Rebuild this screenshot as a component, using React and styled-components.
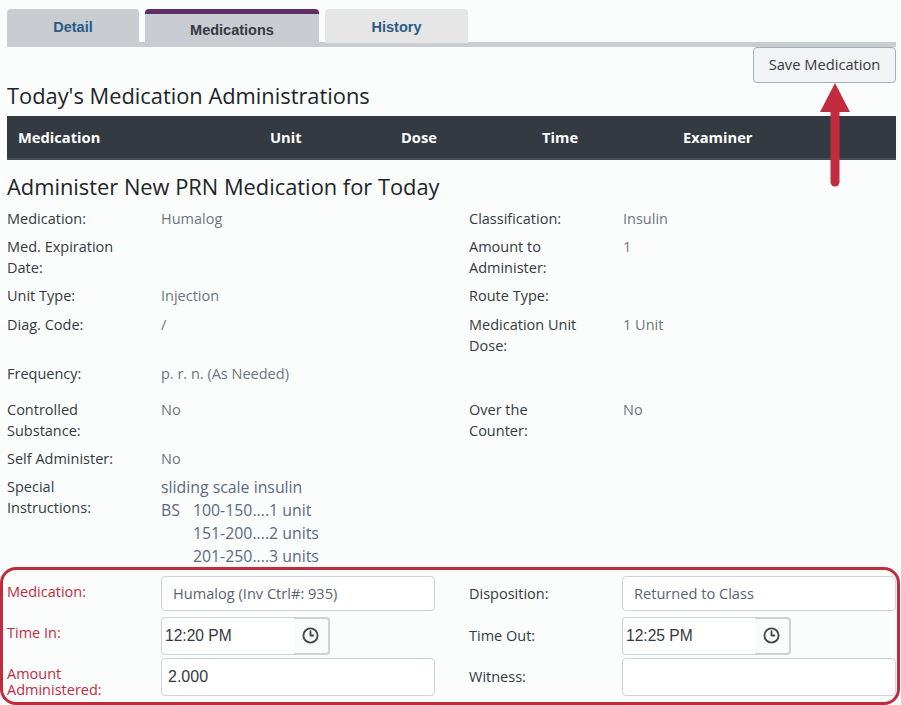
import styled, { createGlobalStyle } from "styled-components";
import { Clock3 } from "lucide-react";

const GlobalStyle = createGlobalStyle`
  html, body {
    margin: 0;
    padding: 0;
    background: #fbfdfd;
  }
  body {
    font-family: "Open Sans", "Liberation Sans", sans-serif;
    font-size: 14.5px;
    color: #343a40;
  }
`;

const details = [
  { label: "Medication:", value: "Humalog", label2: "Classification:", value2: "Insulin", gap: 7 },
  { label: "Med. Expiration Date:", label2: "Amount to Administer:", value2: "1" },
  { label: "Unit Type:", value: "Injection", label2: "Route Type:" },
  { label: "Diag. Code:", value: "/", label2: "Medication Unit Dose:", value2: "1 Unit" },
  { label: "Frequency:", value: "p. r. n. (As Needed)", gap: 15 },
  { label: "Controlled Substance:", value: "No", label2: "Over the Counter:", value2: "No", gap: 7 },
  { label: "Self Administer:", value: "No", gap: 7 },
];

const App = () => {
  return (
    <Page>
      <GlobalStyle />
      <Tabs>
        <Tab>Detail</Tab>
        <ActiveTab>Medications</ActiveTab>
        <Tab $light>History</Tab>
      </Tabs>

      <Toolbar>
        <SaveButton>Save Medication</SaveButton>
        <Arrow width="24" height="106" viewBox="0 0 24 106">
          <path d="M12 20V99" stroke="#c02c3d" strokeWidth="9" strokeLinecap="round" />
          <path d="M12 0L27 29H-3Z" fill="#c02c3d" />
        </Arrow>
      </Toolbar>

      <Title>Today's Medication Administrations</Title>
      <TableHead>
        <Col $w={252}>Medication</Col>
        <Col $w={131}>Unit</Col>
        <Col $w={141}>Dose</Col>
        <Col $w={141}>Time</Col>
        <Col>Examiner</Col>
      </TableHead>

      <SubTitle>Administer New PRN Medication for Today</SubTitle>
      {details.map((row) => (
        <DetailRow key={row.label} $gap={row.gap}>
          <Label>{row.label}</Label>
          <Value>{row.value}</Value>
          <Label>{row.label2}</Label>
          <Value>{row.value2}</Value>
        </DetailRow>
      ))}
      <DetailRow $gap={-1}>
        <Label>Special Instructions:</Label>
        <Instructions>
          <div>sliding scale insulin</div>
          <ScaleRow>
            <span>BS</span>
            <ScaleList>
              <div>100-150....1 unit</div>
              <div>151-200....2 units</div>
              <div>201-250....3 units</div>
            </ScaleList>
          </ScaleRow>
        </Instructions>
      </DetailRow>

      <FormBox>
        <FormRow $gap={6}>
          <RedLabel>Medication:</RedLabel>
          <TextInput readOnly value="Humalog (Inv Ctrl#: 935)" />
          <FormLabel>Disposition:</FormLabel>
          <TextInput readOnly value="Returned to Class" />
        </FormRow>
        <FormRow $gap={3}>
          <RedLabel>Time In:</RedLabel>
          <TimeField>
            <TimeInput readOnly value="12:20 PM" />
            <ClockButton><Clock3 size={17} strokeWidth={2.6} /></ClockButton>
          </TimeField>
          <FormLabel>Time Out:</FormLabel>
          <TimeField>
            <TimeInput readOnly value="12:25 PM" />
            <ClockButton><Clock3 size={17} strokeWidth={2.6} /></ClockButton>
          </TimeField>
        </FormRow>
        <FormRow $gap={0}>
          <RedLabel>Amount Administered:</RedLabel>
          <AmountInput readOnly value="2.000" />
          <FormLabel>Witness:</FormLabel>
          <AmountInput readOnly value="" />
        </FormRow>
      </FormBox>
    </Page>
  );
};

const Page = styled.div`
  width: 889px;
  height: 696px;
  padding: 9px 5px 0 7px;
  overflow: hidden;
`;

const Tabs = styled.div`
  display: flex;
  gap: 6px;
  height: 33px;
  border-bottom: 5px solid #c9ccd1;
`;

const Tab = styled.div`
  width: ${(p) => (p.$light ? "143px" : "132px")};
  height: ${(p) => (p.$light ? "34px" : "33px")};
  background: ${(p) => (p.$light ? "#e6e6e7" : "#c9ccd1")};
  border-radius: 4px 4px 0 0;
  color: #2a5a86;
  font-family: "Liberation Sans", sans-serif;
  font-size: 14.5px;
  font-weight: 700;
  line-height: 36px;
  text-align: center;
`;

const ActiveTab = styled.div`
  width: 174px;
  height: 33px;
  box-sizing: border-box;
  background: #c9ccd1;
  border-top: 5px solid #5f2f68;
  border-radius: 4px 4px 0 0;
  color: #343a40;
  font-family: "Liberation Sans", sans-serif;
  font-size: 14.5px;
  font-weight: 700;
  line-height: 32px;
  text-align: center;
`;

const Toolbar = styled.div`
  position: relative;
  display: flex;
  justify-content: flex-end;
`;

const SaveButton = styled.button`
  width: 143px;
  height: 36px;
  padding: 0 0 2px;
  background: #f2f3f5;
  border: 1px solid #a4aeb8;
  border-radius: 4px;
  color: #343a40;
  font-family: inherit;
  font-size: 14.7px;
`;

const Arrow = styled.svg`
  position: absolute;
  top: 36px;
  right: 49px;
  overflow: visible;
`;

const Title = styled.h2`
  margin: 0;
  height: 33px;
  color: #212529;
  font-size: 21.85px;
  font-weight: 400;
  line-height: 26px;
`;

const TableHead = styled.div`
  display: flex;
  align-items: center;
  box-sizing: border-box;
  height: 44px;
  padding-left: 11px;
  background: #343a42;
  border-bottom: 2px solid #474d55;
  color: #fff;
  font-size: 14.7px;
  font-weight: 700;
`;

const Col = styled.div`
  width: ${(p) => (p.$w ? `${p.$w}px` : "auto")};
`;

const SubTitle = styled.h3`
  margin: 13px 0 7.5px;
  height: 27px;
  color: #212529;
  font-size: 21.85px;
  font-weight: 400;
  line-height: 27px;
`;

const DetailRow = styled.div`
  display: grid;
  grid-template-columns: 154px 308px 154px 273px;
  margin-bottom: ${(p) => (p.$gap === undefined ? "7.5px" : `${p.$gap}px`)};
  line-height: 21px;
`;

const Label = styled.div`
  width: 118px;
  color: #343a40;
`;

const Value = styled.div`
  color: #6c757d;
`;

const Instructions = styled.div`
  color: #5a6a85;
  font-size: 15.85px;
  line-height: 23px;
`;

const ScaleRow = styled.div`
  display: flex;
`;

const ScaleList = styled.div`
  margin-left: 13px;
`;

const FormBox = styled.div`
  box-sizing: border-box;
  height: 138px;
  margin: 0 -4px 0 -7px;
  padding: 6px 1px 0 4px;
  border: 3px solid #c02c3d;
  border-radius: 16px;
`;

const FormRow = styled.div`
  display: grid;
  grid-template-columns: 154px 308px 153px 274px;
  align-items: start;
  margin-bottom: ${(p) => p.$gap}px;
  line-height: 21px;
`;

const FormLabel = styled.label`
  align-self: center;
  width: 110px;
  margin-bottom: 1px;
  color: #343a40;
`;

const RedLabel = styled(FormLabel)`
  align-self: start;
  margin: 8px 0 -2px;
  color: #c02c3d;
  line-height: 16px;
`;

const TextInput = styled.input`
  box-sizing: border-box;
  width: 274px;
  height: 35px;
  padding: 0 11px 1px;
  background: #fff;
  border: 1px solid #ced4da;
  border-radius: 4px;
  color: #5a6370;
  font-family: inherit;
  font-size: 14.6px;
  outline: none;
`;

const AmountInput = styled(TextInput)`
  height: 38px;
  padding: 0 6px;
  color: #343a40;
  font-family: "Liberation Sans", sans-serif;
  font-size: 16px;
`;

const TimeField = styled.div`
  display: flex;
  width: 169px;
  height: 38px;
`;

const TimeInput = styled.input`
  box-sizing: border-box;
  width: 133px;
  padding: 0 3px;
  background: #fff;
  border: 1px solid #ced4da;
  border-right: 0;
  border-radius: 4px 0 0 4px;
  color: #343a40;
  font-family: "Liberation Sans", sans-serif;
  font-size: 15.6px;
  outline: none;
`;

const ClockButton = styled.div`
  box-sizing: border-box;
  display: flex;
  align-items: center;
  justify-content: center;
  width: 36px;
  padding: 0 2px 1px 0;
  background: #fafbfb;
  border: 2px solid #cfd1d3;
  border-left: 0;
  border-radius: 0 4px 4px 0;
  color: #45484a;
`;

export default App;
